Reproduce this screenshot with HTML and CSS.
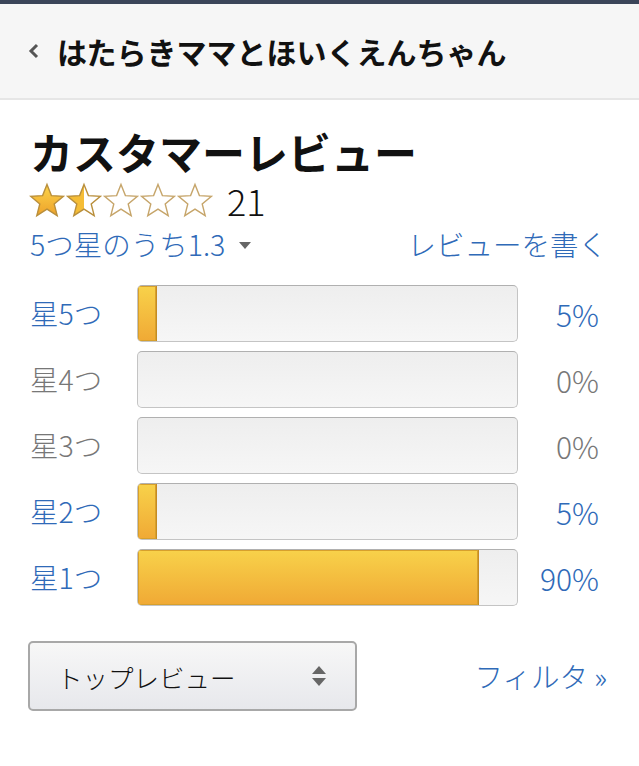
FILE: index.html
```html
<!DOCTYPE html>
<html lang="ja">
<head>
<meta charset="utf-8">
<link rel="stylesheet" href="styles.css">
</head>
<body>
<div class="topbar"></div>
<header class="header">
  <svg class="chev" width="14" height="18" viewBox="0 0 14 18"><path d="M11 3 L5 9 L11 15" fill="none" stroke="#555" stroke-width="3"/></svg>
  <h1 class="title">はたらきママとほいくえんちゃん</h1>
</header>
<main class="content">
  <h2 class="heading">カスタマーレビュー</h2>
  <div class="stars-row">
    <svg class="stars" width="188" height="36" viewBox="0 0 188 36">
      <defs>
        <linearGradient id="g" x1="0" y1="0" x2="0" y2="1">
          <stop offset="0" stop-color="#fbd44a"/>
          <stop offset="1" stop-color="#eea22a"/>
        </linearGradient>
        <linearGradient id="h" x1="0" y1="0" x2="1" y2="0">
          <stop offset="0.5" stop-color="#f5bd36"/>
          <stop offset="0.5" stop-color="#ffffff"/>
        </linearGradient>
        <path id="s" d="M18 1.5 L22.4 12.6 L34.4 13.3 L25.2 21 L28.2 32.6 L18 26.2 L7.8 32.6 L10.8 21 L1.6 13.3 L13.6 12.6 Z"/>
      </defs>
      <use href="#s" x="0" y="1" fill="url(#g)" stroke="#b98f3c" stroke-width="1.4"/>
      <use href="#s" x="37" y="1" fill="url(#h)" stroke="#b98f3c" stroke-width="1.4"/>
      <use href="#s" x="74" y="1" fill="#fff" stroke="#c6a56a" stroke-width="1.4"/>
      <use href="#s" x="111" y="1" fill="#fff" stroke="#c6a56a" stroke-width="1.4"/>
      <use href="#s" x="148" y="1" fill="#fff" stroke="#c6a56a" stroke-width="1.4"/>
    </svg>
    <span class="count">21</span>
  </div>
  <div class="summary">
    <span class="link">5つ星のうち1.3<span class="caret"></span></span>
    <span class="link">レビューを書く</span>
  </div>
  <div class="hist">
    <span class="lbl blue">星5つ</span>
    <div class="bar"><div class="fill" style="width:5%"></div></div>
    <span class="pct blue">5%</span>

    <span class="lbl gray">星4つ</span>
    <div class="bar"></div>
    <span class="pct gray">0%</span>

    <span class="lbl gray">星3つ</span>
    <div class="bar"></div>
    <span class="pct gray">0%</span>

    <span class="lbl blue">星2つ</span>
    <div class="bar"><div class="fill" style="width:5%"></div></div>
    <span class="pct blue">5%</span>

    <span class="lbl blue">星1つ</span>
    <div class="bar"><div class="fill" style="width:90%"></div></div>
    <span class="pct blue">90%</span>
  </div>
  <div class="controls">
    <div class="select">
      <span>トップレビュー</span>
      <svg width="16" height="22" viewBox="0 0 16 22"><path d="M8 1 L15 9 L1 9 Z M1 13 L15 13 L8 21 Z" fill="#666"/></svg>
    </div>
    <span class="link filter">フィルタ »</span>
  </div>
</main>
</body>
</html>
```
FILE: styles.css
```css
* { box-sizing: border-box; }
html, body { margin: 0; padding: 0; background: #fff; }
body {
  width: 639px;
  font-family: "Noto Sans CJK JP", "Noto Sans", sans-serif;
  color: #111;
}
.topbar { height: 4px; background: #3b4559; }
.header {
  height: 96px;
  background: #f6f6f6;
  border-bottom: 2px solid #e6e6e6;
  display: flex;
  align-items: center;
  padding-left: 26px;
}
.chev { margin-right: 17px; }
.title {
  margin: 0;
  font-size: 30px;
  font-weight: 700;
  color: #111;
  line-height: 1;
}
.content { padding: 28px 32px 0 30px; }
.heading {
  margin: 0;
  font-size: 43px;
  font-weight: 700;
  line-height: 46px;
}
.stars-row { display: flex; align-items: center; height: 40px; margin-top: 6px; }
.stars { display: block; margin-left: -1px; }
.count { font-size: 36px; margin-left: 10px; line-height: 1; font-weight: 300; color: #111; }
.summary {
  display: flex;
  justify-content: space-between;
  align-items: center;
  margin-top: 6px;
  height: 36px;
}
.link { color: #2f6ab8; font-size: 28.5px; line-height: 1; font-weight: 300; }
.caret {
  display: inline-block;
  width: 0; height: 0;
  border-left: 6px solid transparent;
  border-right: 6px solid transparent;
  border-top: 7px solid #666;
  margin-left: 14px;
  vertical-align: middle;
  position: relative; top: -3px;
}
.hist {
  display: grid;
  grid-template-columns: 107px 381px 81px;
  grid-auto-rows: 57px;
  row-gap: 9px;
  align-items: center;
  margin-top: 23px;
}
.lbl { font-size: 28.5px; line-height: 1; font-weight: 300; }
.pct { font-size: 30px; line-height: 1; text-align: right; font-weight: 300; }
.blue { color: #2f6ab8; }
.gray { color: #777; }
.bar {
  height: 57px;
  border: 1.5px solid #c4c4c4;
  border-top-color: #b0b0b0;
  border-radius: 5px;
  background: linear-gradient(#eeeeee, #f6f6f6);
  overflow: hidden;
  display: flex;
}
.fill {
  height: 100%;
  background: linear-gradient(#f8d24a, #f0a935);
  border-right: 1.5px solid #c58b22;
  box-shadow: inset 0 0 0 1px #d7a02c;
}
.controls {
  display: flex;
  justify-content: space-between;
  align-items: center;
  margin-top: 35px;
}
.select {
  width: 329px;
  height: 70px;
  margin-left: -2px;
  border: 2px solid #a8a8a8;
  border-radius: 5px;
  background: linear-gradient(#f7f7f7, #e7e8ec);
  display: flex;
  align-items: center;
  justify-content: space-between;
  padding: 0 28px 0 27px;
  font-size: 25.5px;
  font-weight: 300;
  color: #111;
}
.filter { margin-right: 0; }
```
